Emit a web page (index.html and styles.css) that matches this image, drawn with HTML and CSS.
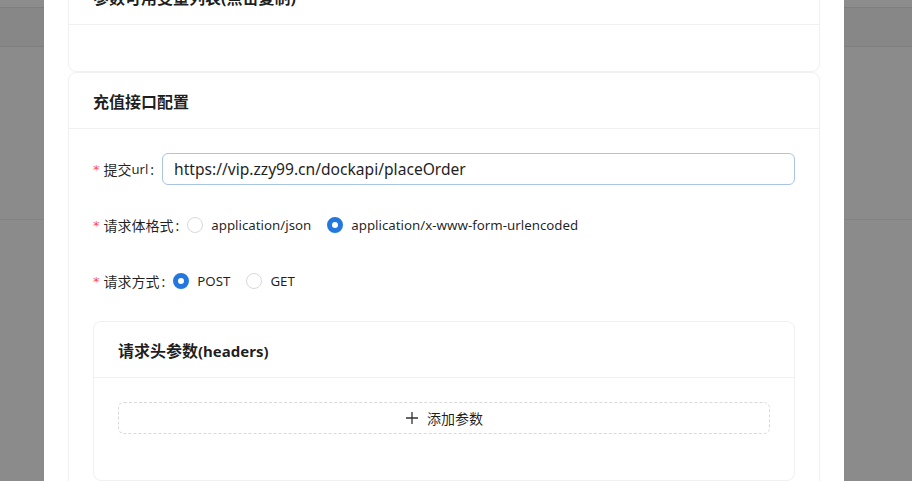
FILE: index.html
```html
<!DOCTYPE html>
<html lang="zh-CN">
<head>
<meta charset="utf-8">
<title>充值接口配置</title>
<link rel="stylesheet" href="styles.css">
</head>
<body>
<div class="page-bg">
  <div class="bg-top"></div>
  <div class="bg-line"></div>
  <div class="bg-band"></div>
  <div class="bg-line"></div>
  <div class="bg-mid"></div>
  <div class="bg-line light"></div>
  <div class="bg-rest"></div>
</div>

<div class="modal">
  <div class="modal-content">
    <section class="card">
      <div class="card-head"><span class="card-title">参数可用变量列表(点击复制)</span></div>
      <div class="card-body empty"></div>
    </section>

    <section class="card">
      <div class="card-head"><span class="card-title">充值接口配置</span></div>
      <div class="card-body">
        <div class="form-item">
          <label class="form-label"><span class="req">*</span>提交<span class="latin">url</span><span class="colon">:</span></label>
          <div class="input">https://vip.zzy99.cn/dockapi/placeOrder</div>
        </div>
        <div class="form-item">
          <label class="form-label"><span class="req">*</span>请求体格式<span class="colon">:</span></label>
          <div class="radio-group">
            <span class="radio"><span class="radio-dot"></span><span class="radio-text">application/json</span></span>
            <span class="radio checked"><span class="radio-dot"></span><span class="radio-text">application/x-www-form-urlencoded</span></span>
          </div>
        </div>
        <div class="form-item">
          <label class="form-label"><span class="req">*</span>请求方式<span class="colon">:</span></label>
          <div class="radio-group">
            <span class="radio checked"><span class="radio-dot"></span><span class="radio-text">POST</span></span>
            <span class="radio"><span class="radio-dot"></span><span class="radio-text">GET</span></span>
          </div>
        </div>

        <section class="card inner">
          <div class="card-head"><span class="card-title">请求头参数<span class="title-latin">(headers)</span></span></div>
          <div class="card-body">
            <div class="dashed-btn">
              <svg class="plus" width="14" height="14" viewBox="0 0 14 14" aria-hidden="true">
                <path d="M7 1v12M1 7h12" stroke="#333" stroke-width="1.3" fill="none"/>
              </svg>
              <span>添加参数</span>
            </div>
          </div>
        </section>
      </div>
    </section>
  </div>
</div>
</body>
</html>
```

FILE: styles.css
```css
* { box-sizing: border-box; }

html, body {
  margin: 0;
  padding: 0;
  width: 912px;
  height: 481px;
  overflow: hidden;
  font-family: "Noto Sans", "Noto Sans CJK SC", sans-serif;
  color: rgba(0, 0, 0, 0.88);
}

.page-bg {
  display: flex;
  flex-direction: column;
  height: 481px;
  background: #8b8b8b;
}
.bg-top { height: 7px; background: #8c8c8c; flex: none; }
.bg-band { height: 38px; background: #878787; flex: none; }
.bg-mid { height: 172px; flex: none; }
.bg-rest { flex: 1; }
.bg-line { height: 1px; background: #7e7e7e; flex: none; }
.bg-line.light { background: #838383; }

.modal {
  position: absolute;
  left: 44px;
  top: 0;
  width: 800px;
  height: 481px;
  background: #fff;
  overflow: hidden;
  padding: 0 24px;
}

.modal-content {
  margin-top: -32px;
}

.card {
  border: 1px solid #f0f0f0;
  border-radius: 8px;
  background: #fff;
}

.card-head {
  height: 56px;
  border-bottom: 1px solid #f0f0f0;
  padding: 0 24px;
  display: flex;
  align-items: center;
}

.card-title {
  font-size: 16px;
  font-weight: 700;
  color: rgba(0, 0, 0, 0.88);
}

.title-latin {
  font-size: 15px;
}

.card-body {
  padding: 24px;
}
.card-body.empty {
  height: 46px;
  padding: 0;
}

.form-item {
  display: flex;
  align-items: center;
  height: 32px;
  margin-bottom: 24px;
}

.form-label {
  display: flex;
  align-items: center;
  font-size: 14px;
  color: rgba(0, 0, 0, 0.88);
  white-space: nowrap;
}

.latin {
  font-size: 13px;
}

.req {
  color: #ff4d4f;
  font-family: "DejaVu Sans", sans-serif;
  font-size: 13px;
  margin-right: 4px;
}

.colon {
  margin: 0 8px 0 2px;
}

.input {
  flex: 1;
  height: 32px;
  border: 1px solid #a9c4e6;
  border-radius: 6px;
  padding: 0 11px;
  display: flex;
  align-items: center;
  font-size: 15.6px;
  color: #1f1f1f;
}

.radio-group {
  display: flex;
  align-items: center;
}

.radio {
  display: inline-flex;
  align-items: center;
  margin-right: 8px;
  font-size: 13.3px;
}

.radio-dot {
  width: 16px;
  height: 16px;
  border-radius: 50%;
  border: 1px solid #d9d9d9;
  background: #fff;
  flex: none;
}

.radio.checked .radio-dot {
  border: 5px solid #2477dc;
  background: #fff;
}

.radio-text {
  padding: 0 8px;
  color: rgba(0, 0, 0, 0.88);
}

.card.inner {
  margin: 0;
}

.dashed-btn {
  height: 32px;
  border: 1px dashed #d9d9d9;
  border-radius: 6px;
  display: flex;
  align-items: center;
  justify-content: center;
  gap: 8px;
  font-size: 14px;
  color: rgba(0, 0, 0, 0.88);
  margin-bottom: 22px;
}

.plus { display: block; }
```
